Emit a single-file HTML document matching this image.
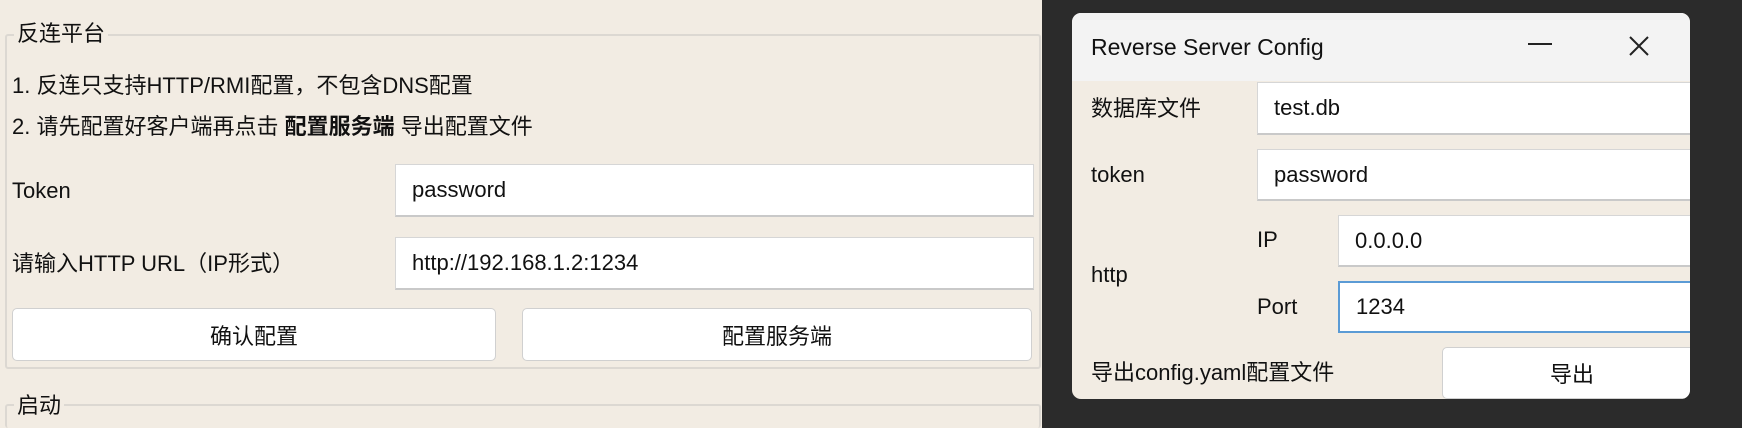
<!DOCTYPE html>
<html><head><meta charset="utf-8"><style>
*{box-sizing:border-box;margin:0;padding:0}
body{width:1742px;height:430px;position:relative;overflow:hidden;background:#2b2b2b;font-family:"Liberation Sans","Noto Sans CJK SC",sans-serif;font-size:22px;color:#111}
.a{position:absolute;white-space:nowrap}
.left{position:absolute;left:0;top:0;width:1042px;height:428px;background:#f2ece3;overflow:hidden}
.grp{position:absolute;border:2px solid #dcd8d2;border-radius:3px}
.leg{position:absolute;background:#f2ece3;padding:0 3px;line-height:26px}
.inp{position:absolute;background:#fff;border:1px solid #d6d6d6;border-bottom:2px solid #c9c9c9;padding-left:16px;display:flex;align-items:center}
.btn{position:absolute;background:#fff;border:1px solid #d0d0d0;border-radius:5px;display:flex;align-items:center;justify-content:center}
.t{line-height:28px;transform:translateY(-50%)}
.dlg{position:absolute;left:1072px;top:13px;width:618px;height:386px;border-radius:9px;overflow:hidden;background:#f2ece3}
.tb{position:absolute;left:0;top:0;width:100%;height:68px;background:#f3f3f3}
.bot{position:absolute;left:0;top:428px;width:1742px;height:2px;background:#fff}
</style></head><body>
<div class="left">
  <div class="grp" style="left:5px;top:34px;width:1036px;height:335px"></div>
  <div class="leg" style="left:14px;top:21px">反连平台</div>
  <div class="a t" style="left:12px;top:86px">1. 反连只支持HTTP/RMI配置，不包含DNS配置</div>
  <div class="a t" style="left:12px;top:127px">2. 请先配置好客户端再点击 <b>配置服务端</b> 导出配置文件</div>
  <div class="a t" style="left:12px;top:191px">Token</div>
  <div class="inp" style="left:395px;top:164px;width:639px;height:53px">password</div>
  <div class="a t" style="left:12px;top:264px">请输入HTTP URL（IP形式）</div>
  <div class="inp" style="left:395px;top:237px;width:639px;height:53px">http://192.168.1.2:1234</div>
  <div class="btn" style="left:12px;top:308px;width:484px;height:53px">确认配置</div>
  <div class="btn" style="left:522px;top:308px;width:510px;height:53px">配置服务端</div>
  <div class="grp" style="left:5px;top:404px;width:1036px;height:24px;border-bottom:none"></div>
  <div class="leg" style="left:14px;top:393px">启动</div>
</div>
<div class="dlg">
  <div class="tb"></div>
  <div class="a t" style="left:19px;top:34px;font-size:23px">Reverse Server Config</div>
  <div class="a" style="left:456px;top:30px;width:24px;height:2px;background:#222"></div>
  <svg class="a" style="left:556px;top:22px" width="22" height="22" viewBox="0 0 22 22"><path d="M2 2L20 20M20 2L2 20" stroke="#222" stroke-width="2"/></svg>
  <div class="a t" style="left:19px;top:96px">数据库文件</div>
  <div class="inp" style="left:185px;top:69px;width:440px;height:53px">test.db</div>
  <div class="a t" style="left:19px;top:162px">token</div>
  <div class="inp" style="left:185px;top:136px;width:440px;height:52px">password</div>
  <div class="a t" style="left:19px;top:262px">http</div>
  <div class="a t" style="left:185px;top:227px">IP</div>
  <div class="inp" style="left:266px;top:202px;width:360px;height:52px">0.0.0.0</div>
  <div class="a t" style="left:185px;top:294px">Port</div>
  <div class="inp" style="left:266px;top:268px;width:360px;height:52px;border:2px solid #5b9bd5">1234</div>
  <div class="a t" style="left:19px;top:360px">导出config.yaml配置文件</div>
  <div class="btn" style="left:370px;top:334px;width:260px;height:52px">导出</div>
</div>
<div class="bot"></div>
</body></html>
